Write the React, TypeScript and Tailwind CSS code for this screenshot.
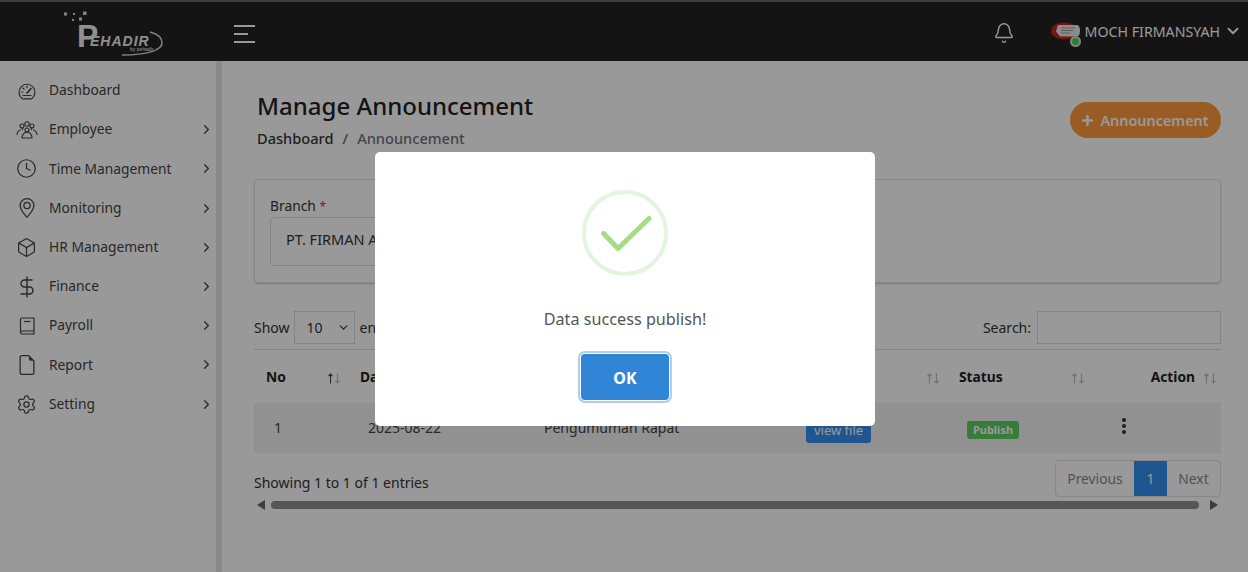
import React from 'react';
import { ChevronRight, ChevronDown, Clock, Box, DollarSign, Bell, Settings, Plus } from 'lucide-react';
import { BsGeoAlt, BsFileEarmark } from 'react-icons/bs';

function GaugeIcon() {
  return (
    <svg width="18" height="18" viewBox="0 0 18 18" fill="none" stroke="currentColor" strokeWidth="1.2" strokeLinecap="round">
      <path d="M4 16.5A8 8 0 1 1 14 16.5Q13.6 16.8 13 16.8H5Q4.4 16.8 4 16.5Z" />
      <path d="M9 11L13 6.5" strokeWidth="1.6" />
      <path d="M3.5 10H5M9 4V5.5M5 6L6 7M13 13.5H5" />
    </svg>
  );
}

function PeopleIcon() {
  return (
    <svg width="22" height="20" viewBox="0 0 22 20" fill="none" stroke="currentColor" strokeWidth="1.1">
      <circle cx="6" cy="6" r="2" />
      <circle cx="11" cy="4" r="2.2" />
      <circle cx="16" cy="6" r="2" />
      <circle cx="11" cy="10" r="2" />
      <path d="M1 15c0-3 2-5 4-5M21 15c0-3-2-5-4-5M7 10c-1-1-1-2 0-2M15 10c1-1 1-2 0-2" />
      <path d="M6 18c0-3 2-6 5-6s5 3 5 6z" />
    </svg>
  );
}

function BookIcon() {
  return (
    <svg width="16" height="18" viewBox="0 0 16 18" fill="none" stroke="currentColor" strokeWidth="1.2">
      <path d="M1.5 15.5V2.5A1.5 1.5 0 0 1 3 1H15V17H3A1.5 1.5 0 0 1 1.5 15.5 1.5 1.5 0 0 1 3 14H15" />
      <path d="M5 4.5H11.5" />
    </svg>
  );
}

const menu = [
  { label: 'Dashboard', icon: <GaugeIcon />, arrow: false },
  { label: 'Employee', icon: <PeopleIcon />, arrow: true },
  { label: 'Time Management', icon: <Clock size={21} strokeWidth={1.4} />, arrow: true },
  { label: 'Monitoring', icon: <BsGeoAlt size={20} />, arrow: true },
  { label: 'HR Management', icon: <Box size={21} strokeWidth={1.4} />, arrow: true },
  { label: 'Finance', icon: <DollarSign size={24} strokeWidth={1.4} />, arrow: true },
  { label: 'Payroll', icon: <BookIcon />, arrow: true },
  { label: 'Report', icon: <BsFileEarmark size={20} />, arrow: true },
  { label: 'Setting', icon: <Settings size={21} strokeWidth={1.4} />, arrow: true },
];

function Sort({ active }: { active?: boolean }) {
  return (
    <svg width="14" height="11" viewBox="0 0 14 11" fill="none" strokeWidth="1.1" className="mt-[6px] shrink-0">
      <path d="M3.500 10.500V1M1.500 3L3.500 1L5.500 3" stroke={active ? '#444' : '#bbb'} />
      <path d="M10.500 0.500V10M8.500 8L10.500 10L12.500 8" stroke="#bbb" />
    </svg>
  );
}

function Logo() {
  return (
    <div className="relative w-[110px] self-stretch ml-[62px] text-[#eee] font-['Liberation_Sans',sans-serif]">
      <svg className="absolute left-0 top-0" width="110" height="59" viewBox="0 0 110 59" fill="none">
        <g fill="#ddd">
          <rect x="2" y="10.5" width="3" height="3" />
          <rect x="11" y="11" width="2" height="2" />
          <rect x="21" y="9.5" width="3.5" height="3.5" />
          <rect x="10" y="17" width="2" height="2" />
          <rect x="17" y="15.5" width="3" height="3" />
        </g>
        <path d="M88 30c8 2 12 6 12 11 0 7-14 12-40 12" stroke="#ddd" strokeWidth="1.5" />
      </svg>
      <span className="absolute left-[15px] top-[18px] text-[32px] leading-none font-bold">P</span>
      <span className="absolute left-[28px] top-[32px] text-[14px] leading-none font-bold italic tracking-[1px]">EHADIR</span>
      <span className="absolute left-[68px] top-[45px] text-[5px] leading-none">by pehadir</span>
    </div>
  );
}

function Avatar() {
  return (
    <div className="relative w-[29px] h-[18px]">
      <svg width="29" height="18" viewBox="0 0 29 18">
        <ellipse cx="13" cy="9" rx="13" ry="8.5" fill="#c4221d" />
        <path d="M7 3h19c2 0 3 2.500 3 5.500s-1 6-3 6H9l-4-5z" fill="#e8e8e8" />
        <path d="M10 6h14M10 8.500h12M10 11h9" stroke="#999" strokeWidth="1" />
      </svg>
      <span className="absolute right-[-1px] bottom-[-7px] w-[11px] h-[11px] rounded-full bg-[#4ad34f] border-[2px] border-[#ddd]"></span>
    </div>
  );
}

export default function App() {
  return (
    <div className="relative w-[1248px] h-[572px] overflow-hidden bg-white text-[14px] text-[#333] font-['Noto_Sans',sans-serif]">
      <header className="h-[61px] bg-[#222] border-t-[2px] border-[#666] flex items-center">
        <Logo />
        <div className="ml-[62px] mt-[4px] flex flex-col gap-[6px] items-start">
          <span className="w-[21px] h-[2px] bg-white"></span>
          <span className="w-[14px] h-[2px] bg-white"></span>
          <span className="w-[21px] h-[2px] bg-white"></span>
        </div>
        <Bell size={22} strokeWidth={1.6} className="ml-auto text-white mt-[3px]" />
        <div className="ml-[36px] mr-[6px] flex items-center text-white text-[14.2px]">
          <Avatar />
          <span className="ml-[5px]">MOCH FIRMANSYAH</span>
          <ChevronDown size={18} strokeWidth={2.5} className="ml-[4px]" />
        </div>
      </header>
      <div className="flex h-[511px]">
        <aside className="w-[222px] shrink-0 border-r-[6px] border-[#e6e6e6] pt-[10px] bg-white">
          {menu.map((m) => (
            <div key={m.label} className="h-[39.2px] flex items-center text-[#444]">
              <span className="ml-[14px] w-[25px] mr-[10px] flex items-center justify-center shrink-0">{m.icon}</span>
              <span className="text-[13.8px]">{m.label}</span>
              {m.arrow && <ChevronRight size={15} strokeWidth={2} className="ml-auto mr-[2px]" />}
            </div>
          ))}
        </aside>
        <main className="flex-1 pl-[32px] pr-[27px]">
          <div className="flex justify-between pt-[27px] h-[118px]">
            <div className="pl-[3px]">
              <h1 className="text-[24px] leading-[36px] font-medium text-[#222]">Manage Announcement</h1>
              <div className="mt-[4px] flex gap-[9px] text-[14.6px] font-medium leading-[20px]">
                <span className="text-[#333]">Dashboard</span>
                <span className="text-[#666]">/</span>
                <span className="text-[#6c757d]">Announcement</span>
              </div>
            </div>
            <button className="mt-[14px] h-[36px] w-[151px] pt-[1px] rounded-full bg-[#ff9a3d] text-white font-semibold text-[14.4px] flex items-center justify-center gap-[5px] pr-[2px]">
              <Plus size={15} strokeWidth={4} />
              Announcement
            </button>
          </div>
          <section className="h-[104px] rounded-[4px] border border-[#e2e2e2] shadow-[0_1px_2px_rgba(0,0,0,0.2)] px-[15px] pt-[16px] text-[13.8px]">
            <div className="leading-[20px]">Branch <span className="text-[#e0244a] text-[12px]">*</span></div>
            <div className="w-[350px] h-[49px] rounded-[4px] border border-[#ddd] flex items-center px-[15px] pb-[3px] text-[14.5px]">PT. FIRMAN ABADI</div>
          </section>
          <div className="mt-[27px] flex justify-between items-center h-[34px]">
            <div className="flex items-center gap-[4px]">
              <span>Show</span>
              <span className="w-[61px] h-[33px] border border-[#ddd] flex items-center justify-between pl-[12px] pr-[4px]">
                10 <ChevronDown size={13} strokeWidth={2} />
              </span>
              <span className="ml-[1px]">entries</span>
            </div>
            <div className="flex items-center gap-[6px]">
              <span>Search:</span>
              <span className="w-[184px] h-[33px] border border-[#ddd]"></span>
            </div>
          </div>
          <div className="mt-[5px] border-t border-[#ddd]">
            <div className="grid grid-cols-[94px_184px_262px_153px_151px_123px] h-[53px] pt-[1px] items-center font-bold text-[#222] text-[13.8px]">
              <div className="flex justify-between pl-[12px] pr-[7px]"><span>No</span><Sort active /></div>
              <div className="flex justify-between pl-[12px] pr-[7px]"><span>Date</span><Sort /></div>
              <div className="flex justify-between pl-[12px] pr-[7px]"><span>Title</span><Sort /></div>
              <div className="flex justify-between pl-[12px] pr-[7px]"><span>File</span><Sort /></div>
              <div className="flex justify-between pl-[12px] pr-[13px]"><span>Status</span><Sort /></div>
              <div className="flex justify-end gap-[8px] pr-[4px]"><span>Action</span><Sort /></div>
            </div>
            <div className="grid grid-cols-[94px_184px_262px_153px_151px_123px] h-[50px] items-center bg-[#f2f2f2] text-[#444]">
              <div className="pl-[20px] pb-[2px]">1</div>
              <div className="pl-[20px] pb-[2px]">2025-08-22</div>
              <div className="pl-[12px] pb-[2px]">Pengumuman Rapat</div>
              <div className="pl-[12px]">
                <span className="inline-block w-[65px] h-[24px] mt-[5px] rounded-[3px] bg-[#3490f0] text-white text-center text-[13px] leading-[22px]">view file</span>
              </div>
              <div className="pl-[20px]">
                <span className="inline-block w-[52px] h-[18px] mt-[2px] rounded-[3px] bg-[#5ad05f] text-white text-center text-[11px] font-bold leading-[18px]">Publish</span>
              </div>
              <div className="pl-[23px] mb-[4px]">
                <svg width="6" height="18" viewBox="0 0 6 18" fill="#333">
                  <circle cx="3" cy="3" r="2" /><circle cx="3" cy="9" r="2" /><circle cx="3" cy="15" r="2" />
                </svg>
              </div>
            </div>
          </div>
          <div className="flex justify-between items-start mt-[7px] h-[37px]">
            <span className="mt-[13px] leading-[20px]">Showing 1 to 1 of 1 entries</span>
            <div className="flex h-[37px] rounded-[4px] border border-[#e2e2e2] text-[#888] items-stretch text-[13.8px]">
              <span className="w-[78px] pt-[1px] flex items-center justify-center">Previous</span>
              <span className="w-[33px] pt-[1px] flex items-center justify-center bg-[#3490f0] text-white">1</span>
              <span className="w-[53px] pt-[1px] flex items-center justify-center">Next</span>
            </div>
          </div>
          <div className="mt-[2px] h-[12px] flex items-center gap-[6px] px-[3px]">
            <span className="w-0 h-0 border-y-[5px] border-y-transparent border-r-[8px] border-r-[#666]"></span>
            <span className="flex-1 h-[8px] rounded-full bg-[#8f8f8f]"></span>
            <span className="w-0 h-0 border-y-[5px] border-y-transparent border-l-[8px] border-l-[#666] ml-[5px]"></span>
          </div>
        </main>
      </div>
      <div className="absolute inset-0 bg-black/40 flex items-center justify-center pt-[6px] pl-[2px]">
        <div className="w-[500px] h-[274px] rounded-[5px] bg-white flex flex-col items-center pt-[38px]">
          <div className="w-[86px] h-[86px] rounded-full border-[4px] border-[#e5f4de] flex items-center justify-center">
            <svg width="54" height="40" viewBox="0 0 54 40" fill="none" className="mt-[1px]">
              <path d="M5.500 19.500L20 34.500L51 4.500" stroke="#a5dc86" strokeWidth="5" strokeLinecap="round" strokeLinejoin="round" />
            </svg>
          </div>
          <p className="mt-[31px] text-[16.2px] leading-[24px] text-[#545454]">Data success publish!</p>
          <button className="mt-[23px] w-[88px] h-[46px] pt-[1px] rounded-[4px] bg-[#3085d6] text-white font-bold text-[16px] shadow-[0_0_0_1px_#fff,0_0_0_3px_rgba(48,133,214,0.4)]">OK</button>
        </div>
      </div>
    </div>
  );
}
